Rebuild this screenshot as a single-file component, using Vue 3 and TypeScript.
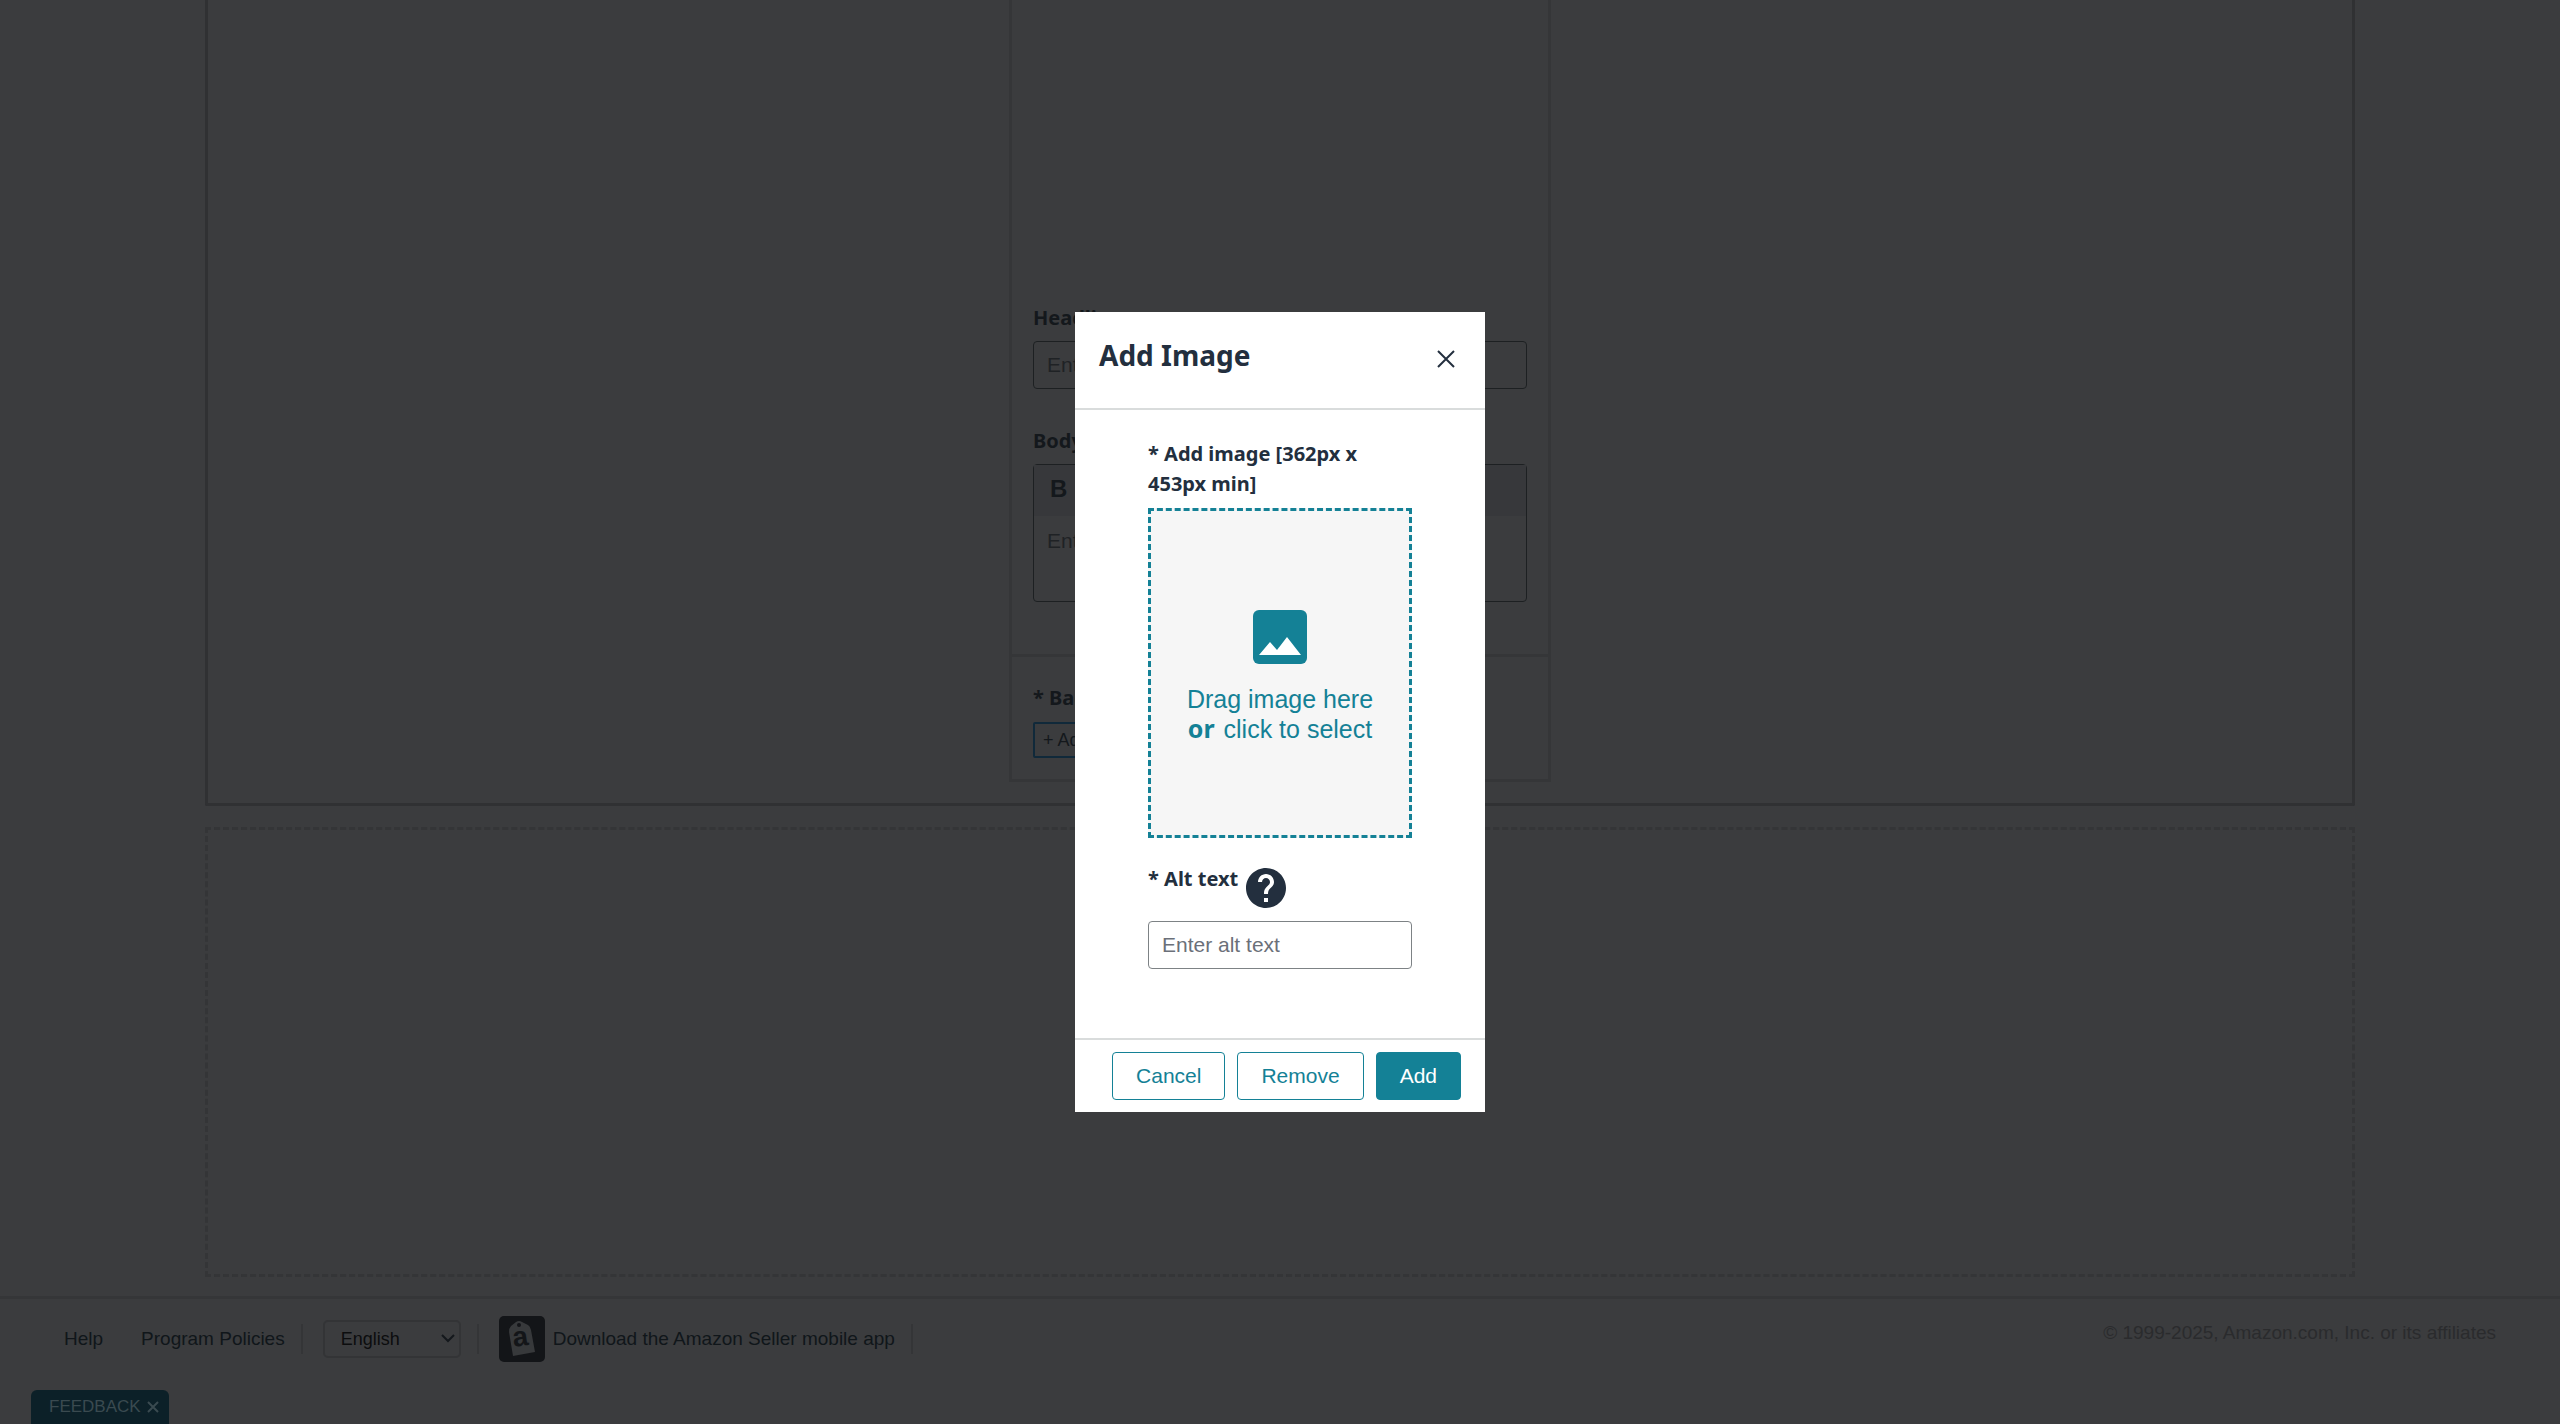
<script setup lang="ts">
import { ref } from 'vue'

const headline = ref('')
const body = ref('')
const altText = ref('')
const language = ref('English')
</script>

<template>
  <div class="page">
    <main class="content">
      <section class="module">
        <div class="card">
          <div class="preview"></div>
          <div class="field">
            <label class="label" for="headline">Headline</label>
            <input id="headline" v-model="headline" class="input" type="text" placeholder="Enter headline text" />
          </div>
          <div class="field">
            <label class="label" for="body">Body text</label>
            <div class="editor">
              <div class="toolbar"><button type="button" class="bold" aria-label="Bold">B</button></div>
              <textarea id="body" v-model="body" placeholder="Enter body text"></textarea>
            </div>
          </div>
          <div class="background">
            <span class="label">* Background</span>
            <button type="button" class="add-image">+ Add image</button>
          </div>
        </div>
      </section>
      <section class="dropzone"></section>
    </main>

    <footer class="footer">
      <nav class="links">
        <a href="#">Help</a>
        <a href="#">Program Policies</a>
        <span class="rule"></span>
        <span class="language">
          <select v-model="language" aria-label="Language">
            <option>English</option>
          </select>
          <svg viewBox="0 0 14 9" width="14" height="9"><path d="M1 1l6 6 6-6" fill="none" stroke="currentColor" stroke-width="2" /></svg>
        </span>
        <span class="rule"></span>
        <a href="#" class="app">
          <svg viewBox="0 0 46 46" width="46" height="46">
            <rect width="46" height="46" rx="5" fill="#131518" />
            <path d="M10 16q0-4 2-6l5-4q3-2 6 0l6 3q2 1 3 5l4 22-22 4z" fill="#37393b" />
            <circle cx="20" cy="9" r="2" fill="#131518" />
            <text x="22" y="30" text-anchor="middle" font-size="28" font-weight="700" fill="#131518" transform="rotate(-8 22 26)">a</text>
          </svg>
          <span>Download the Amazon Seller mobile app</span>
        </a>
        <span class="rule"></span>
      </nav>
      <p class="copyright">© 1999-2025, Amazon.com, Inc. or its affiliates</p>
    </footer>

    <button type="button" class="feedback">
      <span>FEEDBACK</span>
      <svg viewBox="0 0 12 12" width="12" height="12"><path d="M1 1l10 10M11 1L1 11" stroke="currentColor" stroke-width="2" /></svg>
    </button>

    <div class="backdrop">
      <form class="dialog" role="dialog" aria-labelledby="dialog-title" @submit.prevent>
        <header class="dialog-head">
          <h1 id="dialog-title">Add Image</h1>
          <button type="button" class="close" aria-label="Close">
            <svg viewBox="0 0 18 18" width="18" height="18"><path d="M1 1l16 16M17 1L1 17" stroke="currentColor" stroke-width="2" /></svg>
          </button>
        </header>
        <div class="dialog-body">
          <span class="label">* Add image [362px x 453px min]</span>
          <button type="button" class="picker">
            <svg viewBox="0 0 54 54" width="54" height="54">
              <rect width="54" height="54" rx="6" fill="#148196" />
              <path d="M6 45l11-13 7 8 10-13 14 18z" fill="#fff" />
            </svg>
            <span>Drag image here<br /><b>or</b> click to select</span>
          </button>
          <div class="alt-row">
            <label class="label" for="alt">* Alt text</label>
            <svg viewBox="0 0 24 24" width="48" height="48">
              <path fill="#232f3e" d="M12 2C6.480 2 2 6.480 2 12s4.480 10 10 10 10-4.480 10-10S17.520 2 12 2zm1 17h-2v-2h2v2zm2.070-7.750l-.9.920C13.450 12.900 13 13.500 13 15h-2v-.5c0-1.100.450-2.100 1.170-2.830l1.240-1.260c.370-.360.590-.860.590-1.410 0-1.100-.9-2-2-2s-2 .9-2 2H8c0-2.210 1.790-4 4-4s4 1.790 4 4c0 .880-.360 1.680-.930 2.250z" />
            </svg>
          </div>
          <input id="alt" v-model="altText" class="input" type="text" placeholder="Enter alt text" />
        </div>
        <footer class="dialog-foot">
          <button type="button" class="btn">Cancel</button>
          <button type="button" class="btn">Remove</button>
          <button type="submit" class="btn primary">Add</button>
        </footer>
      </form>
    </div>
  </div>
</template>

<style>
body {
  margin: 0;
  background: #3b3c3e;
}
</style>

<style scoped>
.page {
  min-height: 100vh;
  display: flex;
  flex-direction: column;
  box-sizing: border-box;
  background: #3b3c3e;
  color: #14181c;
  font: 19px/30px "Liberation Sans", Arial, sans-serif;
}
.page * {
  box-sizing: border-box;
}
button,
input,
select,
textarea {
  font: inherit;
  color: inherit;
}
.content {
  padding: 0 8%;
}
.label {
  display: block;
  font: 700 20px/30px "Noto Sans", "Open Sans", sans-serif;
}
.module {
  display: flex;
  justify-content: center;
  border: 3px solid #303133;
  border-top: 0;
  border-radius: 0 0 2px 2px;
  padding-bottom: 21px;
}
.card {
  width: 542px;
  border: 3px solid #353638;
  border-top: 0;
}
.preview {
  height: 303px;
}
.field {
  padding: 0 21px;
  margin-bottom: 37px;
}
.input {
  display: block;
  width: 100%;
  height: 48px;
  margin-top: 8px;
  padding: 0 13px;
  border: 1px solid #1d2022;
  border-radius: 4px;
  background: transparent;
  font-size: 21px;
}
.input::placeholder,
.editor textarea::placeholder {
  color: #1f2225;
  opacity: 1;
}
.editor {
  height: 138px;
  margin-top: 8px;
  border: 1px solid #1d2022;
  border-radius: 4px;
}
.toolbar {
  height: 51px;
  background: #37383b;
}
.bold {
  height: 48px;
  padding: 0 16px;
  border: 0;
  background: none;
  font-weight: 700;
  font-size: 24px;
}
.editor textarea {
  display: block;
  width: 100%;
  height: 84px;
  padding: 10px 13px;
  border: 0;
  background: none;
  resize: none;
  font-size: 21px;
}
.background {
  margin-top: 52px;
  padding: 26px 21px 21px;
  border-top: 3px solid #353638;
}
.add-image {
  height: 36px;
  margin-top: 9px;
  padding: 0 8px;
  border: 2px solid #10293a;
  border-radius: 2px;
  background: none;
  font-size: 18px;
  line-height: 30px;
}
.dropzone {
  height: 450px;
  margin-top: 21px;
  border: 3px dashed #343537;
}
.footer {
  display: flex;
  justify-content: space-between;
  margin-top: 19px;
  padding: 17px 64px 0;
  border-top: 3px solid #353638;
}
.links {
  display: flex;
  align-items: center;
  height: 46px;
}
.links a {
  color: #10161a;
  text-decoration: none;
}
.links a + a {
  margin-left: 38px;
}
.rule {
  width: 2px;
  height: 30px;
  margin: 0 20px 0 16px;
  background: #343537;
}
.language {
  position: relative;
  width: 138px;
}
.language select {
  display: block;
  width: 100%;
  height: 38px;
  padding: 0 16px;
  appearance: none;
  border: 2px solid #333436;
  border-radius: 5px;
  background: #3b3c3e;
  color: #0c0d0e;
  font-size: 18px;
}
.language svg {
  position: absolute;
  right: 6px;
  top: 14px;
}
.app {
  display: flex;
  align-items: center;
  gap: 8px;
}
.copyright {
  margin: 2px 0 0;
  color: #2a2b2d;
}
.feedback {
  position: fixed;
  left: 31px;
  bottom: 0;
  display: flex;
  align-items: center;
  gap: 6px;
  height: 34px;
  padding: 0 10px 0 18px;
  border: 0;
  border-radius: 6px 6px 0 0;
  background: #0c2028;
  color: #3a4a50;
  font-size: 17px;
}
.backdrop {
  position: fixed;
  inset: 0;
  display: flex;
  align-items: center;
  justify-content: center;
}
.dialog {
  width: 410px;
  background: #fff;
  color: #232f3e;
}
.dialog-head {
  display: flex;
  justify-content: space-between;
  height: 98px;
  padding: 24px 24px 0;
  border-bottom: 2px solid #d9dcdc;
}
.dialog-head h1 {
  margin: 0;
  font: 700 28px/38px "Noto Sans", "Open Sans", sans-serif;
}
.close {
  align-self: flex-start;
  height: 46px;
  padding: 0 6px;
  border: 0;
  background: none;
}
.close svg {
  display: block;
}
.dialog-body {
  padding: 29px 73px 69px;
}
.picker {
  display: flex;
  flex-direction: column;
  align-items: center;
  justify-content: center;
  gap: 20px;
  width: 100%;
  height: 330px;
  margin-top: 9px;
  padding: 8px 0 0;
  border: 3px dashed #148196;
  background: #f6f6f6;
  color: #148196;
  font-size: 25px;
}
.picker b {
  margin-right: 2px;
  font-family: "Noto Sans", "Open Sans", sans-serif;
  line-height: 20px;
}
.alt-row {
  display: flex;
  gap: 4px;
  margin-top: 26px;
}
.dialog .input {
  margin-top: 9px;
  border-color: #7d8285;
  background: #fff;
}
.dialog .input::placeholder {
  color: #6b7079;
}
.dialog-foot {
  display: flex;
  justify-content: flex-end;
  gap: 12px;
  padding: 12px 24px;
  border-top: 2px solid #d9dcdc;
}
.btn {
  height: 48px;
  padding: 0 23px;
  border: 1px solid #148196;
  border-radius: 4px;
  background: #fff;
  color: #148196;
  font-size: 21px;
}
.primary {
  background: #148196;
  color: #fff;
}
</style>
